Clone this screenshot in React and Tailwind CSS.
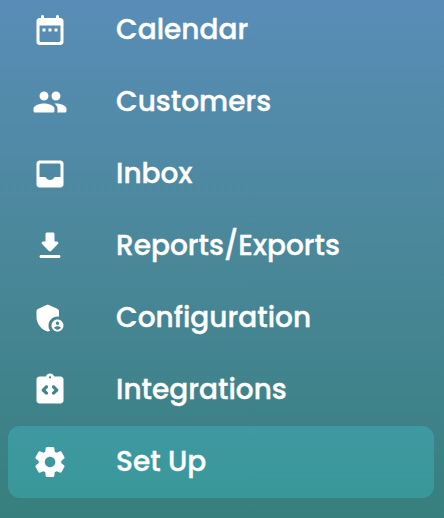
import React, { useState } from 'react';

// Icônes SVG
const Icon = ({ children }) => (
  <svg className="w-9 h-9 shrink-0" fill="currentColor" fillRule="evenodd" viewBox="0 0 24 24">
    {children}
  </svg>
);
const CalendarIcon = () => (
  <Icon>
    <path d="M19 4h-1V3c0-.55-.45-1-1-1s-1 .45-1 1v1H8V3c0-.55-.45-1-1-1s-1 .45-1 1v1H5c-1.11 0-1.99.9-1.99 2L3 20c0 1.1.89 2 2 2h14c1.1 0 2-.9 2-2V6c0-1.1-.9-2-2-2zm0 15c0 .55-.45 1-1 1H6c-.55 0-1-.45-1-1V9h14v10z" />
    <path d="M7 11h2v2H7zM11 11h2v2h-2zM15 11h2v2h-2z" />
  </Icon>
);
const CustomersIcon = () => (
  <Icon>
    <path d="M16 11c1.66 0 2.99-1.34 2.99-3S17.66 5 16 5s-3 1.34-3 3 1.34 3 3 3zm-8 0c1.66 0 2.99-1.34 2.99-3S9.66 5 8 5 5 6.34 5 8s1.34 3 3 3zm0 2c-2.33 0-7 1.17-7 3.5V18c0 .55.45 1 1 1h12c.55 0 1-.45 1-1v-1.5c0-2.33-4.67-3.5-7-3.5zm8 0c-.29 0-.62.02-.97.05.02.01.03.03.04.04 1.14.83 1.93 1.94 1.93 3.41V18c0 .35-.07.69-.18 1H22c.55 0 1-.45 1-1v-1.5c0-2.33-4.67-3.5-7-3.5z" />
  </Icon>
);
const InboxIcon = () => (
  <Icon>
    <path d="M19 3H5c-1.1 0-2 .9-2 2v14c0 1.1.9 2 2 2h14c1.1 0 2-.9 2-2V5c0-1.1-.9-2-2-2zm0 11h-3.56c-.36 0-.68.19-.86.5-.52.9-1.47 1.5-2.58 1.5s-2.06-.6-2.58-1.5c-.18-.31-.51-.5-.86-.5H5V6c0-.55.45-1 1-1h12c.55 0 1 .45 1 1v8z" />
  </Icon>
);
const ReportsIcon = () => (
  <Icon>
    <path d="M16.59 9H15V4c0-.55-.45-1-1-1h-4c-.55 0-1 .45-1 1v5H7.41c-.89 0-1.34 1.08-.71 1.71l4.59 4.59c.39.39 1.02.39 1.41 0l4.59-4.59c.63-.63.19-1.71-.7-1.71zM5 19c0 .55.45 1 1 1h12c.55 0 1-.45 1-1s-.45-1-1-1H6c-.55 0-1 .45-1 1z" />
  </Icon>
);
const ConfigurationIcon = () => (
  <Icon>
    <path d="M17 11c.34 0 .67.04 1 .09V7.58c0-.8-.47-1.52-1.2-1.83l-5.5-2.4c-.51-.22-1.09-.22-1.6 0l-5.5 2.4C3.47 6.07 3 6.79 3 7.58v3.6c0 4.54 3.2 8.79 7.5 9.82.55-.13 1.08-.32 1.6-.55-.69-.98-1.1-2.17-1.1-3.45 0-3.31 2.69-6 6-6z" />
    <path d="M17 13c-2.21 0-4 1.79-4 4s1.79 4 4 4 4-1.79 4-4-1.79-4-4-4zm0 1.38c.62 0 1.12.51 1.12 1.12s-.51 1.12-1.12 1.12-1.12-.51-1.12-1.12.5-1.12 1.12-1.12zm0 5.37c-.93 0-1.74-.46-2.24-1.17.05-.72 1.51-1.08 2.24-1.08s2.19.36 2.24 1.08c-.5.71-1.31 1.17-2.24 1.17z" />
  </Icon>
);
const IntegrationsIcon = () => (
  <Icon>
    <path d="M19 3h-4.18C14.4 1.84 13.3 1 12 1s-2.4.84-2.82 2H5c-1.1 0-2 .9-2 2v14c0 1.1.9 2 2 2h14c1.1 0 2-.9 2-2V5c0-1.1-.9-2-2-2zM10.4 14.9c-.42.42-1.1.42-1.52 0l-2.15-2.15c-.42-.42-.42-1.08 0-1.5L8.88 9.1c.42-.42 1.1-.42 1.52 0 .42.42.42 1.1 0 1.52L9.02 12l1.38 1.38c.42.42.42 1.1 0 1.52zM12 4.25c-.41 0-.75-.34-.75-.75s.34-.75.75-.75.75.34.75.75-.34.75-.75.75zM13.6 14.9c-.42-.42-.42-1.1 0-1.52L14.98 12l-1.38-1.38c-.42-.42-.42-1.1 0-1.52.42-.42 1.1-.42 1.52 0l2.15 2.15c.42.42.42 1.08 0 1.5l-2.15 2.15c-.42.42-1.1.42-1.52 0z" />
  </Icon>
);
const SetUpIcon = () => (
  <Icon>
    <path d="M19.5 12c0-.23-.01-.45-.03-.68l1.86-1.41c.4-.3.51-.86.26-1.3l-1.87-3.23c-.25-.44-.79-.62-1.25-.42l-2.15.91c-.37-.26-.76-.49-1.17-.68l-.29-2.31c-.06-.5-.49-.88-.99-.88h-3.73c-.51 0-.94.38-1 .88l-.29 2.31c-.41.19-.8.42-1.17.68l-2.15-.91c-.46-.2-1-.02-1.25.42L2.41 8.62c-.25.44-.14.99.26 1.3l1.86 1.41c-.02.22-.03.44-.03.67s.01.45.03.68l-1.86 1.41c-.4.3-.51.86-.26 1.3l1.87 3.23c.25.44.79.62 1.25.42l2.15-.91c.37.26.76.49 1.17.68l.29 2.31c.06.5.49.88.99.88h3.73c.5 0 .93-.38.99-.88l.29-2.31c.41-.19.8-.42 1.17-.68l2.15.91c.46.2 1 .02 1.25-.42l1.87-3.23c.25-.44.14-.99-.26-1.3l-1.86-1.41c.03-.23.04-.45.04-.68zm-7.46 3.5c-1.93 0-3.5-1.57-3.5-3.5s1.57-3.5 3.5-3.5 3.5 1.57 3.5 3.5-1.57 3.5-3.5 3.5z" />
  </Icon>
);

const items = [
  { label: 'Calendar', icon: CalendarIcon },
  { label: 'Customers', icon: CustomersIcon },
  { label: 'Inbox', icon: InboxIcon },
  { label: 'Reports/Exports', icon: ReportsIcon },
  { label: 'Configuration', icon: ConfigurationIcon },
  { label: 'Integrations', icon: IntegrationsIcon },
  { label: 'Set Up', icon: SetUpIcon },
];

function App() {
  const [active, setActive] = useState('Set Up');

  return (
    <div className="h-screen overflow-hidden bg-linear-to-b/srgb from-[#598db7] via-[#498799] to-[#377f7e] font-['Poppins','Inter',sans-serif]">
      <nav className="-mt-1.5 pl-2 pr-2.5 flex flex-col">
        {items.map(({ label, icon: ItemIcon }) => (
          <button
            key={label}
            onClick={() => setActive(label)}
            className={`h-18 w-full flex items-center gap-12 pl-6 rounded-xl text-white ${active === label ? 'bg-linear-to-b/srgb from-[#3e99a2] to-[#399798]' : ''}`}
          >
            <ItemIcon />
            <span className="text-[28px] leading-10 font-medium whitespace-nowrap [-webkit-text-stroke:0.35px_white]">{label}</span>
          </button>
        ))}
      </nav>
    </div>
  );
}

export default App;
